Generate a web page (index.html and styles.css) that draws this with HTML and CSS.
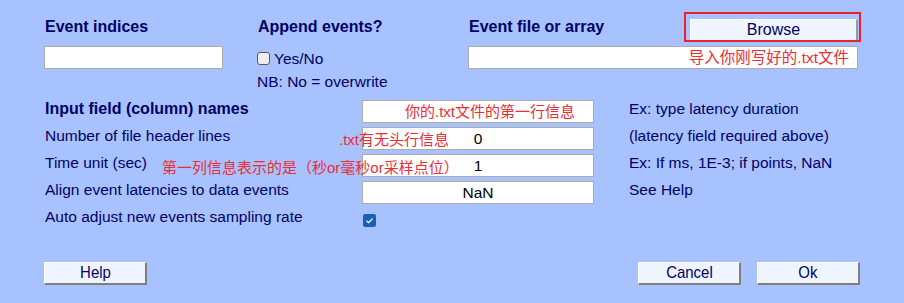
FILE: index.html
```html
<!DOCTYPE html>
<html lang="en">
<head>
    <meta charset="UTF-8">
    <title>Import event info</title>
    <link rel="stylesheet" href="styles.css">
</head>
<body>

    <div class="dialog">

        <div class="top">
            <div class="col col-indices">
                <div class="title">Event indices</div>
                <div class="field indices-field"></div>
            </div>

            <div class="col col-append">
                <div class="title">Append events?</div>
                <div class="check-line"><span class="box"></span>Yes/No</div>
                <div class="nb">NB: No = overwrite</div>
            </div>

            <div class="col col-file">
                <div class="title file-head">
                    <span>Event file or array</span>
                    <span class="btn browse">Browse</span>
                    <span class="mark"></span>
                </div>
                <div class="field file-field"><span class="red red-file">导入你刚写好的.txt文件</span></div>
            </div>
        </div>

        <div class="rows">
            <div class="label bold">Input field (column) names</div>
            <div class="field first-field"><span class="red">你的.txt文件的第一行信息</span></div>
            <div class="note">Ex: type latency duration</div>

            <div class="label">Number of file header lines</div>
            <div class="field">0<span class="red over over-header">.txt有无头行信息</span></div>
            <div class="note">(latency field required above)</div>

            <div class="label">Time unit (sec)</div>
            <div class="field">1<span class="red over over-unit">第一列信息表示的是（秒or毫秒or采样点位）</span></div>
            <div class="note">Ex: If ms, 1E-3; if points, NaN</div>

            <div class="label">Align event latencies to data events</div>
            <div class="field">NaN</div>
            <div class="note">See Help</div>

            <div class="label">Auto adjust new events sampling rate</div>
            <div class="check-cell">
                <span class="box checked">
                    <svg width="13" height="13" viewBox="0 0 13 13"><path d="M3.5 6.8 L5.6 8.7 L9.6 4.6" fill="none" stroke="#fff" stroke-width="1.3"/></svg>
                </span>
            </div>
            <div class="note"></div>
        </div>

        <div class="actions">
            <span class="btn"><span class="cond">Help</span></span>
            <span class="spacer"></span>
            <span class="btn"><span class="cond">Cancel</span></span>
            <span class="btn"><span class="cond">Ok</span></span>
        </div>

    </div>

</body>
</html>
```

FILE: styles.css
```css
body {
    margin: 0;
    background-color: #a8c2ff;
    font-family: 'Liberation Sans', Arial, 'Noto Sans CJK SC', sans-serif;
    font-size: 15.5px;
    color: #000066;
    width: 904px;
    height: 303px;
    overflow: hidden;
}

.dialog {
    padding-left: 44px;
}

/* top block: three columns */
.top {
    display: flex;
    height: 100px;
    box-sizing: border-box;
    padding-top: 18px;
}

.col-indices {
    width: 203px;
}

.col-append {
    width: 211px;
    padding-left: 10px;
}

.col-file {
    width: 390px;
}

.title {
    height: 28px;
    line-height: 18px;
    font-size: 16px;
    font-weight: bold;
    padding-left: 1px;
}

.file-head {
    position: relative;
    display: flex;
    justify-content: space-between;
    align-items: flex-start;
}

.field {
    position: relative;
    height: 23px;
    box-sizing: border-box;
    background: #fff;
    border: 1px solid #acacac;
    display: flex;
    align-items: center;
    justify-content: center;
    color: #000;
    line-height: 18px;
}

.indices-field {
    width: 179px;
}

.file-field {
    justify-content: flex-end;
    padding-right: 8px;
}

.first-field {
    justify-content: flex-start;
    padding-left: 42px;
}

.red {
    color: #ec2d35;
    font-family: 'Liberation Sans', 'Noto Sans CJK SC', sans-serif;
    font-size: 15px;
    white-space: nowrap;
}

.red-file {
    font-size: 15.5px;
}

.over {
    position: absolute;
    font-size: 15px;
    line-height: 18px;
}

.over-header {
    left: -24px;
    top: 3px;
}

.over-unit {
    left: -201px;
    top: 4px;
}

.check-line {
    margin-top: 4px;
    line-height: 18px;
    display: flex;
    align-items: flex-start;
}

.nb {
    margin-top: 5px;
    line-height: 18px;
}

.box {
    display: inline-block;
    width: 13px;
    height: 13px;
    box-sizing: border-box;
    margin-top: 2px;
    margin-right: 4px;
    border: 1px solid #5a5a5a;
    border-radius: 3px;
    background: #eeeeee;
}

.box.checked {
    border: none;
    border-radius: 2px;
    background: #1b5fb3;
    margin: 6px 0 0 1px;
}

.box.checked svg {
    display: block;
}

/* parameter rows */
.rows {
    display: grid;
    grid-template-columns: 318px 232px 1fr;
    grid-auto-rows: 27px;
}

.label {
    line-height: 18px;
    padding-left: 1px;
}

.bold {
    font-size: 16px;
    font-weight: bold;
}

.note {
    line-height: 18px;
    padding-left: 35px;
}

/* buttons */
.btn {
    display: flex;
    align-items: center;
    justify-content: center;
    width: 103px;
    height: 23px;
    box-sizing: border-box;
    background: #eef5ff;
    border-top: 1px solid #ffffff;
    border-left: 1px solid #ffffff;
    border-right: 2px solid #7f7f7f;
    border-bottom: 2px solid #7f7f7f;
    color: #000066;
    line-height: 18px;
}

.browse {
    width: 168px;
    height: 23px;
    margin-top: 1px;
    font-size: 16px;
    font-weight: normal;
    border-right-color: #9a9a9a;
}

.mark {
    position: absolute;
    left: 216px;
    top: -6px;
    width: 177px;
    height: 30px;
    box-sizing: border-box;
    border: 2px solid #e8232d;
}

.actions {
    display: flex;
    margin-top: 27px;
    width: 816px;
    gap: 16px;
}

.spacer {
    flex: 1;
}

.cond {
    font-size: 17px;
    display: inline-block;
    transform: scaleX(0.88);
}
```
